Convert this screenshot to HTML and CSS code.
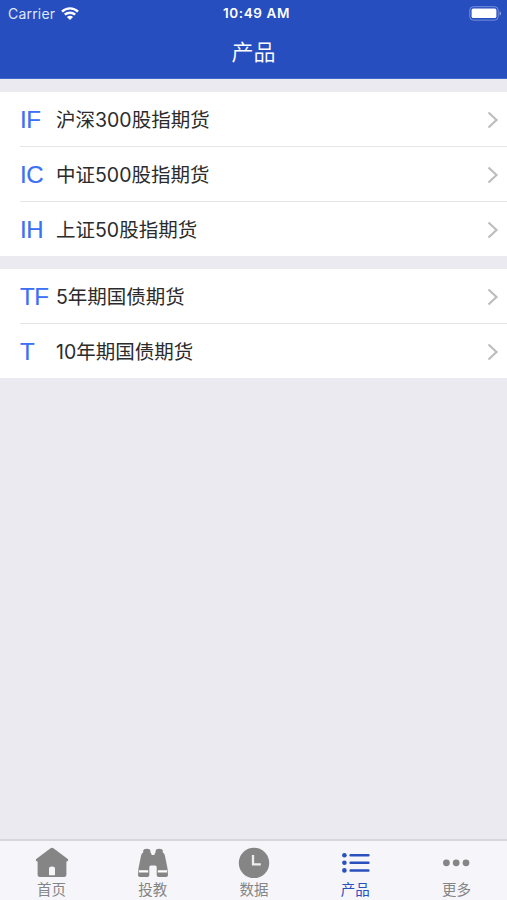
FILE: index.html
```html
<!DOCTYPE html>
<html lang="zh-CN">
<head>
<meta charset="utf-8">
<title>产品</title>
<link rel="stylesheet" href="styles.css">
</head>
<body>
<div class="app">
  <header class="header">
    <div class="status">
      <div class="carrier"><span>Carrier</span>
        <svg class="wifi" width="18" height="13" viewBox="0 0 18 13" fill="none" stroke="#fff" stroke-width="2.4"><path d="M1 4.6C5.5.3 12.5.3 17 4.6M3.8 7.7c2.9-2.7 7.5-2.7 10.4 0"/><path d="M5.9 9.9c1.7-1.5 4.5-1.5 6.2 0L9 12.9z" fill="#fff" stroke="none"/></svg>
      </div>
      <div class="time">10:49 AM</div>
      <svg class="battery" width="33" height="15" viewBox="0 0 33 15"><rect x=".8" y=".7" width="28.4" height="13.4" rx="3.4" fill="none" stroke="#7590dc" stroke-width="1"/><rect x="2.6" y="2.5" width="24.8" height="9.6" rx="1.6" fill="#fff"/><path d="M30.6 5.2c1.9.7 1.9 3.7 0 4.4z" fill="#8ea6e6"/></svg>
    </div>
    <h1 class="title">产品</h1>
  </header>
  <main class="content">
    <ul class="group">
      <li class="row"><span class="code">IF</span><span class="label">沪深300股指期货</span><svg class="chevron" viewBox="0 0 12 18"><path d="M1.5 1.5 9.5 9l-8 7.5"/></svg></li>
      <li class="row"><span class="code">IC</span><span class="label">中证500股指期货</span><svg class="chevron" viewBox="0 0 12 18"><path d="M1.5 1.5 9.5 9l-8 7.5"/></svg></li>
      <li class="row"><span class="code">IH</span><span class="label">上证50股指期货</span><svg class="chevron" viewBox="0 0 12 18"><path d="M1.5 1.5 9.5 9l-8 7.5"/></svg></li>
    </ul>
    <ul class="group">
      <li class="row"><span class="code">TF</span><span class="label">5年期国债期货</span><svg class="chevron" viewBox="0 0 12 18"><path d="M1.5 1.5 9.5 9l-8 7.5"/></svg></li>
      <li class="row"><span class="code">T</span><span class="label">10年期国债期货</span><svg class="chevron" viewBox="0 0 12 18"><path d="M1.5 1.5 9.5 9l-8 7.5"/></svg></li>
    </ul>
  </main>
  <nav class="tabs">
    <a class="tab"><svg viewBox="0 0 34 32"><path fill="currentColor" fill-rule="evenodd" d="M15.2 1.4q1.8-1.2 3.6 0L32.8 12q1 1.5-.3 2.3l-1.1.3v12.9q0 2.5-2.5 2.5H5.1q-2.5 0-2.5-2.5V14.6l-1.1-.3Q.2 13.5 1.2 12zM14 28.2h6v-6.3q0-2.4-3-2.4t-3 2.4z"/></svg><span>首页</span></a>
    <a class="tab"><svg viewBox="0 0 34 32"><path fill="currentColor" d="M7.2 3.8Q7.4 1.8 10.8 1.8t3.6 2v1.6q1.2.8 1.2 2.6h2.8q0-1.8 1.2-2.6V3.8q.2-2 3.6-2t3.6 2v1.6q1.8.8 2.1 3.1l2.6 12.8.5 6.9q0 1.8-2 1.8h-7.3q-2 0-2-1.8v-8q0-1.8-1.6-1.8h-4.2q-1.6 0-1.6 1.8v8q0 1.8-2 1.8H4q-2 0-2-1.8l.5-6.9L5.1 8.5q.3-2.3 2.1-3.1z"/><path fill="#fff" d="M3 23.2h9.2v2.4H3zm18.8 0H31v2.4h-9.2z"/></svg><span>投教</span></a>
    <a class="tab"><svg viewBox="0 0 34 32"><circle cx="17" cy="15.9" r="15.2" fill="currentColor"/><path d="M16 8v9.4h7.8" fill="none" stroke="#eee" stroke-width="2.3"/></svg><span>数据</span></a>
    <a class="tab active"><svg viewBox="0 0 34 32"><g fill="currentColor"><circle cx="6.4" cy="8.3" r="2.3"/><circle cx="6.4" cy="15.8" r="2.3"/><circle cx="6.4" cy="23.4" r="2.3"/></g><path d="M12.6 8.3h17.8M12.6 15.8h17.8M12.6 23.4h17.8" stroke="currentColor" stroke-width="2.5" stroke-linecap="round"/></svg><span>产品</span></a>
    <a class="tab"><svg viewBox="0 0 34 32"><g fill="currentColor"><circle cx="7.4" cy="15.8" r="3.4"/><circle cx="17.2" cy="15.8" r="3.4"/><circle cx="27" cy="15.8" r="3.4"/></g></svg><span>更多</span></a>
  </nav>
</div>
</body>
</html>
```

FILE: styles.css
```css
* { box-sizing: border-box; }
body {
  margin: 0;
  font-family: Inter, "Noto Sans CJK SC", sans-serif;
  background: #eaeaf0;
}
.app {
  display: flex;
  flex-direction: column;
  height: 900px;
}
.header {
  height: 79px;
  background: #264ebf;
  color: #fff;
  border-bottom: 1px solid #4266ca;
}
.status {
  display: grid;
  grid-template-columns: 1fr auto 1fr;
  align-items: center;
  height: 27px;
  padding: 0 5px 0 8px;
  font-size: 14px;
  line-height: 27px;
}
.carrier {
  display: flex;
  align-items: center;
  gap: 6px;
  color: #dfe7fc;
  letter-spacing: 0.2px;
}
.time {
  padding-left: 3px;
  font-size: 13.5px;
  font-weight: 600;
  letter-spacing: 0.6px;
}
.battery { justify-self: end; }
.title {
  margin: 0;
  font-size: 22px;
  font-weight: 350;
  line-height: 50px;
  text-align: center;
}
.content { flex: 1; }
.group {
  margin: 13px 0 0;
  padding: 0 0 0 20px;
  list-style: none;
  background: #fff;
}
.row {
  display: flex;
  align-items: center;
  height: 55px;
  padding: 2px 8px 0 0;
  border-bottom: 1px solid #e5e5e8;
}
.row:last-child {
  height: 54px;
  border-bottom: 0;
}
.code {
  width: 36px;
  font-family: "Liberation Sans", sans-serif;
  font-size: 24px;
  line-height: 30px;
  letter-spacing: -0.3px;
  color: #3c70f5;
  -webkit-text-stroke: 0.2px #3c70f5;
}
.label {
  flex: 1;
  font-size: 19.5px;
  line-height: 30px;
  color: #2b2b2b;
}
.chevron {
  width: 12px;
  height: 18px;
  fill: none;
  stroke: #bdbdc1;
  stroke-width: 2.2;
}
.tabs {
  display: grid;
  grid-template-columns: repeat(5, 1fr);
  height: 61px;
  padding-left: 1px;
  border-top: 2px solid #d6d6dc;
  background: #f6f6fa;
}
.tab {
  display: flex;
  flex-direction: column;
  align-items: center;
  padding-top: 6px;
  color: #858585;
  font-size: 14.5px;
  line-height: 22px;
}
.tab svg {
  width: 34px;
  height: 32px;
}
.tab.active { color: #2950bd; }
```
